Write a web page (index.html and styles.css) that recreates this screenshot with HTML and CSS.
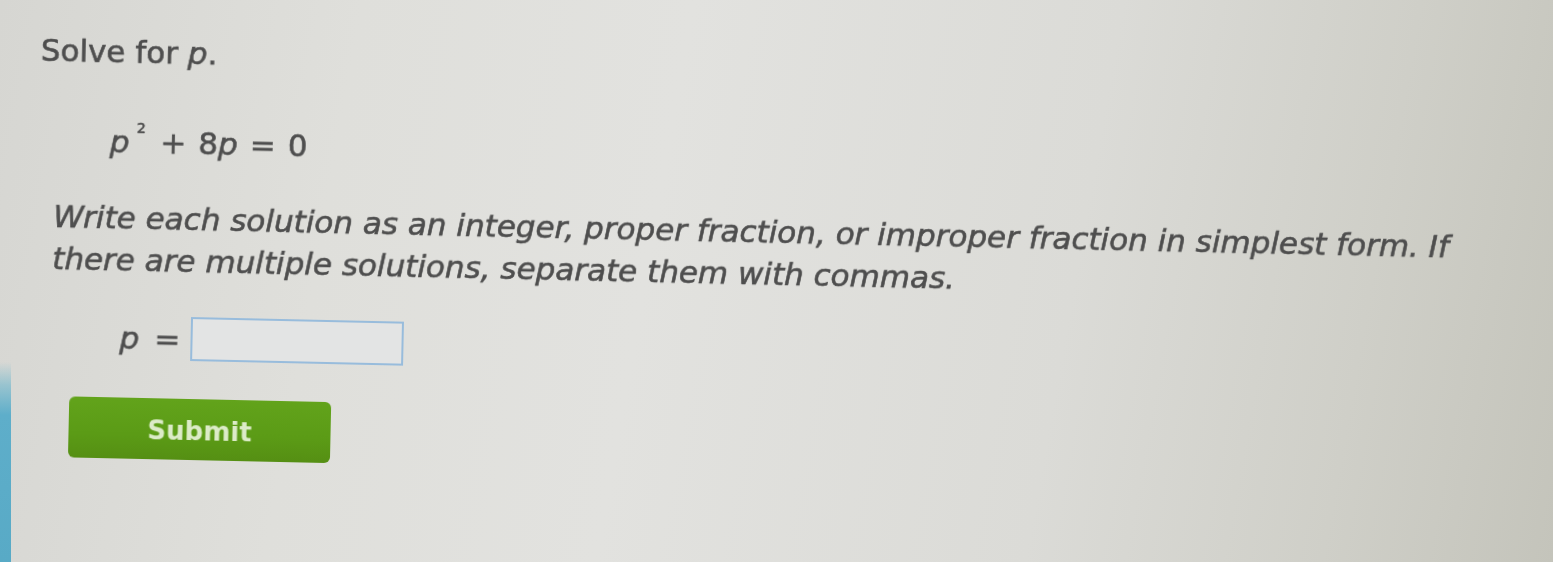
FILE: index.html
```html
<!DOCTYPE html>
<html lang="en">
<head>
<meta charset="utf-8">
<title>Solve for p</title>
<link rel="stylesheet" href="styles.css">
</head>
<body>
<div class="screen">
  <div class="edge"></div>
  <main class="content">
    <p class="prompt">Solve for <i class="var">p</i>.</p>
    <p class="equation"><i class="var">p</i><sup class="power">2</sup><span class="op plus">+</span>8<i class="var">p</i><span class="op">=</span>0</p>
    <p class="instructions">Write each solution as an integer, proper fraction, or improper fraction in simplest form. If there are multiple solutions, separate them with commas.</p>
    <div class="answer-row">
      <i class="var">p</i><span class="op answer-eq">=</span><span class="answer-box"></span>
    </div>
    <button class="submit" type="button">Submit</button>
  </main>
</div>
</body>
</html>
```
FILE: styles.css
```css
html, body {
  margin: 0;
  padding: 0;
  height: 562px;
  overflow: hidden;
}

body {
  background: linear-gradient(100deg, #d6d6d2 0%, #dfdfdb 22%, #e2e2df 42%, #dbdbd7 68%, #cfcfc8 86%, #c4c4bb 100%);
  font-family: "DejaVu Sans", Verdana, sans-serif;
  color: #4e4e4e;
}

.screen {
  display: flex;
  align-items: flex-start;
  height: 562px;
}

.edge {
  width: 11px;
  height: 562px;
  flex: none;
  background: linear-gradient(to bottom, rgba(100, 178, 204, 0) 0, rgba(100, 178, 204, 0) 362px, rgba(110, 182, 204, 0.6) 385px, #5eaeca 415px, #58aac6 100%);
}

.content {
  flex: 1;
  padding: 32px 0 0 26px;
  transform: rotate(1.25deg);
  transform-origin: 42px 226px;
  filter: blur(0.6px);
  font-size: 31px;
  line-height: 36px;
  -webkit-text-stroke: 0.6px #4e4e4e;
}

.prompt {
  margin: 0;
}

.var {
  font-style: italic;
}

.equation {
  margin: 54px 0 0 71px;
}

.power {
  font-size: 14px;
  line-height: 0;
  vertical-align: 20px;
  margin: 0 3px 0 7px;
}

.op {
  margin: 0 12px;
}

.instructions {
  margin: 37px 0 0 16px;
  max-width: 1440px;
  font-style: italic;
  line-height: 42px;
}

.answer-row {
  display: flex;
  align-items: center;
  margin: 35px 0 0 85px;
  height: 44px;
}

.answer-eq {
  margin: 0 10px 0 15px;
}

.answer-box {
  display: block;
  width: 213px;
  height: 44px;
  box-sizing: border-box;
  border: 2px solid #98bcdc;
  background: #e3e4e4;
}

.submit {
  display: block;
  margin: 38px 0 0 36px;
  width: 262px;
  height: 61px;
  box-sizing: border-box;
  padding: 4px 0 0;
  border: none;
  border-radius: 6px;
  background: linear-gradient(to bottom, #62a31b 0%, #5b9b16 60%, #558f13 100%);
  color: #dcebc8;
  -webkit-text-stroke: 0;
  font-family: "DejaVu Sans", Verdana, sans-serif;
  font-size: 26px;
  font-weight: bold;
  line-height: 57px;
  text-align: center;
}
```
